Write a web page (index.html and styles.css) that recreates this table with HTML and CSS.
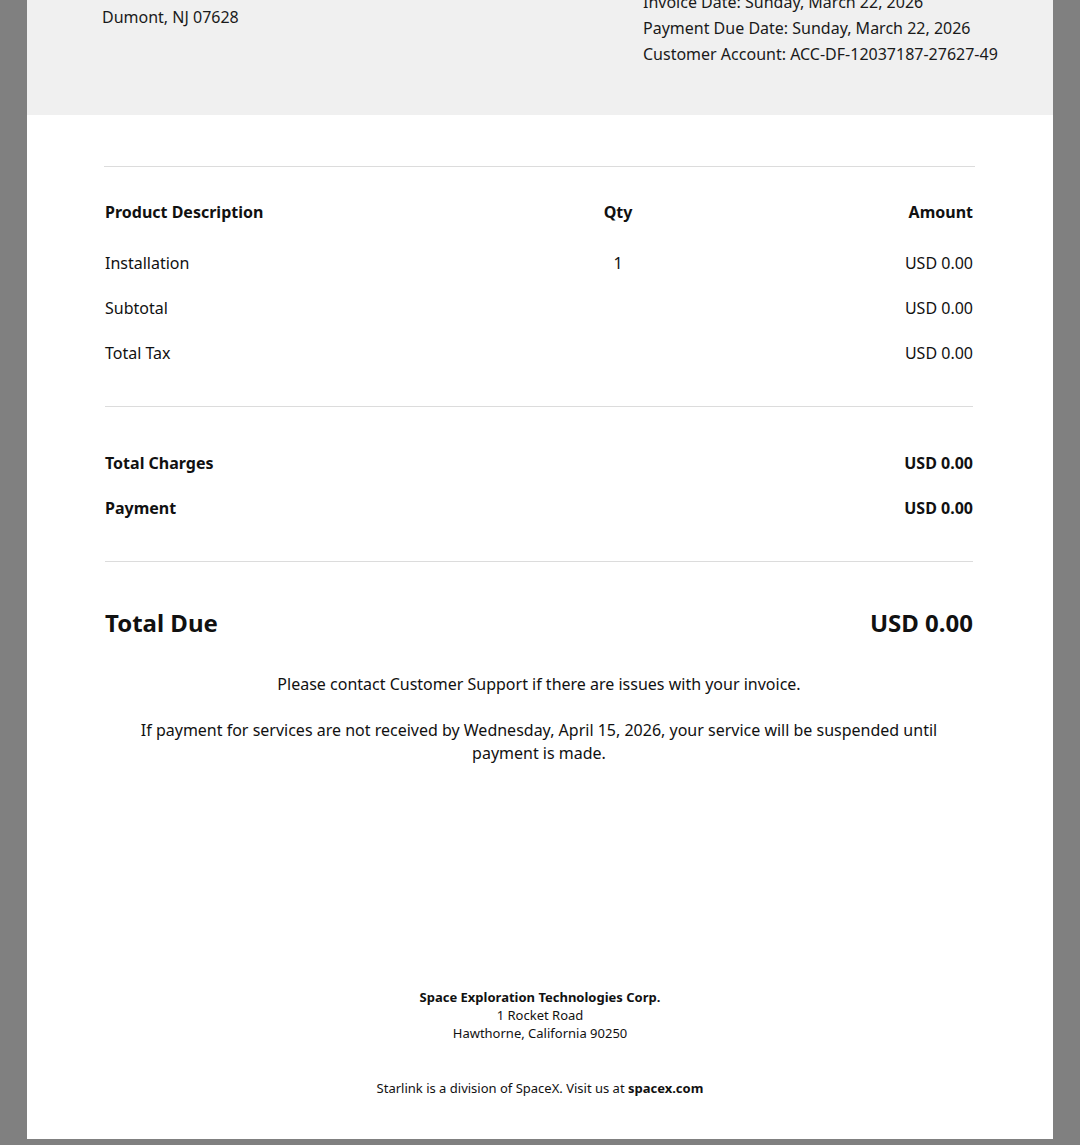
FILE: index.html
```html
<!DOCTYPE html>
<html lang="en">
<head>
<meta charset="utf-8">
<title>Invoice</title>
<link rel="stylesheet" href="styles.css">
</head>
<body>
<div class="sheet">
  <header class="head">
    <div class="head-left">
      <div class="line">Dumont, NJ 07628</div>
    </div>
    <div class="head-right">
      <div class="line">Invoice Date: Sunday, March 22, 2026</div>
      <div class="line">Payment Due Date: Sunday, March 22, 2026</div>
      <div class="line">Customer Account: ACC-DF-12037187-27627-49</div>
    </div>
  </header>

  <main class="content">
    <hr class="rule rule-top">
    <div class="items">
      <div class="row row-head">
        <span class="c-desc">Product Description</span>
        <span class="c-qty">Qty</span>
        <span class="c-amt">Amount</span>
      </div>
      <div class="row">
        <span class="c-desc">Installation</span>
        <span class="c-qty">1</span>
        <span class="c-amt">USD 0.00</span>
      </div>
      <div class="row">
        <span class="c-desc">Subtotal</span>
        <span class="c-qty"></span>
        <span class="c-amt">USD 0.00</span>
      </div>
      <div class="row">
        <span class="c-desc">Total Tax</span>
        <span class="c-qty"></span>
        <span class="c-amt">USD 0.00</span>
      </div>
    </div>
    <hr class="rule">
    <div class="totals">
      <div class="row row-bold">
        <span class="c-desc">Total Charges</span>
        <span class="c-qty"></span>
        <span class="c-amt">USD 0.00</span>
      </div>
      <div class="row row-bold">
        <span class="c-desc">Payment</span>
        <span class="c-qty"></span>
        <span class="c-amt">USD 0.00</span>
      </div>
    </div>
    <hr class="rule">
    <div class="due">
      <span>Total Due</span>
      <span>USD 0.00</span>
    </div>
    <p class="note note-first">Please contact Customer Support if there are issues with your invoice.</p>
    <p class="note">If payment for services are not received by Wednesday, April 15, 2026, your service will be suspended until payment is made.</p>
  </main>

  <footer class="foot">
    <div class="foot-name">Space Exploration Technologies Corp.</div>
    <div>1 Rocket Road</div>
    <div>Hawthorne, California 90250</div>
    <div class="foot-div">Starlink is a division of SpaceX. Visit us at <b>spacex.com</b></div>
  </footer>
</div>
</body>
</html>
```

FILE: styles.css
```css
html, body {
  margin: 0;
  padding: 0;
  background: #808080;
  height: 1145px;
  overflow: hidden;
}
body {
  font-family: "Noto Sans", "Open Sans", sans-serif;
  color: #111;
  font-size: 16px;
}
.sheet {
  margin: -20px 27px 0 27px;
  width: 1026px;
  height: 1159px;
  background: #fff;
  display: flex;
  flex-direction: column;
}
.head {
  background: #f0f0f0;
  height: 135px;
  display: flex;
  box-sizing: border-box;
  color: #1a1a1a;
}
.head .line {
  line-height: 26px;
  white-space: nowrap;
}
.head-left {
  padding-left: 75px;
  padding-top: 24px;
  width: 616px;
  flex: 0 0 616px;
  box-sizing: border-box;
}
.head-right {
  padding-top: 9px;
}
.content {
  padding: 0 80px 0 78px;
  display: flex;
  flex-direction: column;
}
.rule {
  border: 0;
  border-top: 1px solid #dcdcdc;
  margin: 0;
  height: 0;
}
.rule-top {
  margin: 51px -2px 0 -1px;
}
.items {
  margin-top: 22px;
  margin-bottom: 31px;
}
.row {
  display: grid;
  grid-template-columns: 440px 146px 1fr;
  height: 45px;
  align-items: center;
  line-height: 24px;
}
.row-head {
  font-weight: 700;
  margin-bottom: 6px;
}
.row-bold {
  font-weight: 700;
}
.c-qty {
  text-align: center;
}
.c-amt {
  text-align: right;
}
.totals {
  margin-top: 33px;
  margin-bottom: 31px;
}
.due {
  margin-top: 38px;
  height: 45px;
  display: flex;
  justify-content: space-between;
  align-items: center;
  font-size: 24px;
  font-weight: 700;
}
.note {
  margin: 0;
  padding: 0 24px;
  text-align: center;
  line-height: 23px;
}
.note-first {
  margin-top: 28px;
  margin-bottom: 23px;
}
.foot {
  margin-top: auto;
  padding-bottom: 42px;
  text-align: center;
  font-size: 13px;
  line-height: 18px;
  color: #111;
}
.foot-name {
  font-weight: 700;
}
.foot-div {
  margin-top: 37px;
}
```
